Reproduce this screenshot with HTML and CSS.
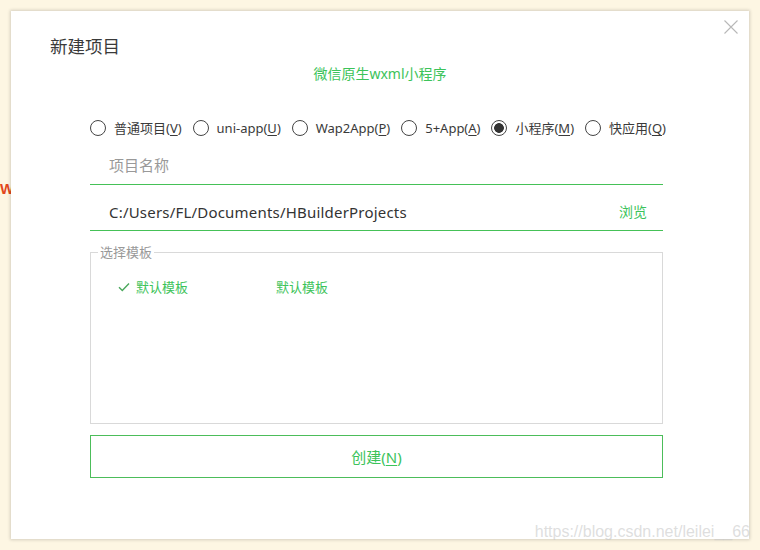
FILE: index.html
```html
<!DOCTYPE html>
<html lang="zh-CN">
<head>
<meta charset="utf-8">
<title>新建项目</title>
<link rel="stylesheet" href="styles.css">
</head>
<body>
<span class="bg-mark">W</span>
<div class="dialog">
  <button class="close" aria-label="关闭">
    <svg width="14" height="14" viewBox="0 0 14 14"><path d="M0.5 0.5L13.5 13.5M13.5 0.5L0.5 13.5" stroke="#b8b8b8" stroke-width="1.1" fill="none"/></svg>
  </button>
  <div class="title">新建项目</div>
  <div class="subtitle">微信原生wxml小程序</div>
  <div class="form">
    <div class="radios">
      <label class="radio"><span class="dot"></span><span>普通项目(<u>V</u>)</span></label>
      <label class="radio"><span class="dot"></span><span>uni-app(<u>U</u>)</span></label>
      <label class="radio"><span class="dot"></span><span>Wap2App(<u>P</u>)</span></label>
      <label class="radio"><span class="dot"></span><span>5+App(<u>A</u>)</span></label>
      <label class="radio"><span class="dot on"></span><span>小程序(<u>M</u>)</span></label>
      <label class="radio"><span class="dot"></span><span>快应用(<u>Q</u>)</span></label>
    </div>
    <div class="field"><span class="placeholder">项目名称</span></div>
    <div class="field path"><span class="value">C:/Users/FL/Documents/HBuilderProjects</span><span class="browse">浏览</span></div>
    <fieldset class="templates">
      <legend>选择模板</legend>
      <div class="tpl-list">
        <div class="tpl selected">
          <svg class="check" width="12" height="10" viewBox="0 0 12 10"><path d="M1 5.2L4.3 8.5L11 1.5" stroke="#4aa85c" stroke-width="1.4" fill="none"/></svg>
          <span>默认模板</span>
        </div>
        <div class="tpl"><span class="check-space"></span><span>默认模板</span></div>
      </div>
    </fieldset>
    <button class="create">创建(<u>N</u>)</button>
  </div>
</div>
<div class="watermark">https://blog.csdn.net/leilei__66</div>
</body>
</html>
```

FILE: styles.css
```css
html, body {
  margin: 0;
  padding: 0;
  background: #fdf6e3;
  width: 760px;
  height: 550px;
  overflow: hidden;
  font-family: "Noto Sans", "Noto Sans CJK SC", sans-serif;
  color: #333;
}

.bg-mark {
  position: absolute;
  left: 0;
  top: 180px;
  font-family: "Liberation Sans", sans-serif;
  font-size: 15px;
  font-weight: bold;
  color: #e2471c;
}

.dialog {
  position: relative;
  z-index: 1;
  box-sizing: border-box;
  width: 738px;
  height: 528px;
  margin: 11px 0 0 11px;
  background: #fff;
  box-shadow: 0 0 3px 1px rgba(0, 0, 0, 0.16);
}

.close {
  position: absolute;
  top: 9px;
  right: 11px;
  width: 14px;
  height: 14px;
  padding: 0;
  border: 0;
  background: none;
  line-height: 0;
}

.title {
  padding: 23px 0 0 39px;
  font-size: 17.5px;
  line-height: 24px;
  color: #3a3a3a;
}

.subtitle {
  margin-top: 7px;
  text-align: center;
  font-size: 14px;
  line-height: 18px;
  color: #3cc35a;
}

.form {
  margin-left: 79px;
  width: 573px;
}

.radios {
  display: flex;
  justify-content: space-between;
  align-items: center;
  width: 576px;
  margin-top: 35px;
  height: 20px;
  font-size: 13px;
  line-height: 20px;
  color: #3a3a3a;
  white-space: nowrap;
}

.radio {
  display: flex;
  align-items: center;
  gap: 8px;
}

.dot {
  box-sizing: border-box;
  width: 16px;
  height: 16px;
  border: 1.3px solid #444;
  border-radius: 50%;
  background: #fff;
}

.dot.on {
  background: radial-gradient(circle, #333 0 4.5px, #fff 5.2px);
}

.radio u, .create u { text-underline-offset: 2px; }

.field {
  display: flex;
  justify-content: space-between;
  align-items: center;
  padding: 17px 0 9px 19px;
  height: 20px;
  line-height: 20px;
  border-bottom: 1px solid #45c157;
}

.field.path {
  padding-top: 17px;
  padding-bottom: 8px;
}

.placeholder {
  font-size: 15px;
  color: #999;
}

.value {
  font-size: 15px;
  letter-spacing: 0.2px;
  color: #333;
}

.browse {
  margin-right: 16px;
  font-size: 14px;
  color: #3cc35a;
}

.templates {
  box-sizing: border-box;
  margin: 12px 0 0 0;
  padding: 0 0 0 7px;
  height: 181px;
  border: 1px solid #d9d9d9;
}

.templates legend {
  padding: 0 2px;
  font-size: 13px;
  line-height: 18px;
  color: #999;
}

.tpl-list {
  display: flex;
  margin: 16px 0 0 20px;
}

.tpl {
  display: flex;
  align-items: center;
  gap: 6px;
  width: 140px;
  font-size: 13px;
  line-height: 20px;
  color: #3cc35a;
}

.check-space {
  width: 12px;
}

.create {
  display: block;
  box-sizing: border-box;
  width: 573px;
  height: 43px;
  margin-top: 11px;
  padding: 0;
  border: 1px solid #4cbd5a;
  background: #fff;
  font-family: inherit;
  font-size: 15px;
  color: #3cc35a;
}

.watermark {
  position: absolute;
  z-index: 2;
  right: 10px;
  top: 521px;
  font-family: "Liberation Sans", sans-serif;
  font-size: 16px;
  line-height: 22px;
  color: rgba(200, 200, 200, 0.6);
}
```
